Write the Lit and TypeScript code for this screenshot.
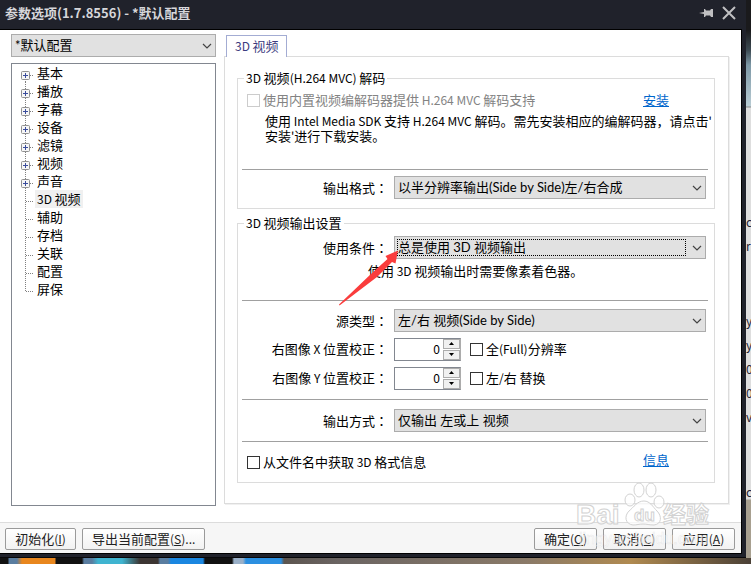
import { LitElement, html, svg, css, nothing } from "lit";
import { customElement, state } from "lit/decorators.js";
import { classMap } from "lit/directives/class-map.js";

interface Category {
  name: string;
  branch: boolean;
}

const CATEGORIES: Category[] = [
  { name: "基本", branch: true },
  { name: "播放", branch: true },
  { name: "字幕", branch: true },
  { name: "设备", branch: true },
  { name: "滤镜", branch: true },
  { name: "视频", branch: true },
  { name: "声音", branch: true },
  { name: "3D 视频", branch: false },
  { name: "辅助", branch: false },
  { name: "存档", branch: false },
  { name: "关联", branch: false },
  { name: "配置", branch: false },
  { name: "屏保", branch: false },
];

/** Sets Latin runs a size smaller than the Chinese text, and centres the wide colon. */
function mixed(text: string) {
  return text
    .split(/([ -~]+|：)/)
    .filter((run) => run)
    .map((run) =>
      run === "："
        ? html`<span class="mid">${run}</span>`
        : /^[ -~]/.test(run)
          ? html`<span class="latin">${run}</span>`
          : run,
    );
}

@customElement("app-root")
export class AppRoot extends LitElement {
  @state() private selected = "3D 视频";

  static styles = css`
    :host {
      display: block;
      font: 13px/16px "Noto Sans CJK SC", "Noto Sans", sans-serif;
      color: #000;
    }
    * {
      box-sizing: border-box;
    }
    button,
    input,
    select {
      font: inherit;
      color: inherit;
      margin: 0;
    }
    .latin {
      font-size: 12px;
      line-height: 1;
      white-space: pre;
    }
    .mid {
      font-family: "Noto Sans CJK JP", sans-serif;
      line-height: 1;
    }
    .desktop {
      display: grid;
      grid-template-columns: 1fr 5px;
      grid-template-rows: 1fr 6px;
      min-height: 100vh;
      background: #17171b;
    }
    .window {
      display: flex;
      flex-direction: column;
      min-width: 0;
      background: #20222b;
      border-bottom: 1px solid #08080a;
      padding: 0 4px 3px 0;
    }
    .titlebar {
      display: flex;
      align-items: center;
      height: 29px;
      padding: 0 5px 4px 5px;
      color: #d6d6da;
    }
    .titlebar h1 {
      flex: 1;
      margin: 0;
      font-size: 13px;
      line-height: 16px;
    }
    .titlebar button {
      display: flex;
      padding: 0;
      border: 0;
      background: none;
      color: #c0c0c2;
    }
    .titlebar .pin {
      margin-right: 8px;
    }
    .client {
      flex: 1;
      display: flex;
      flex-direction: column;
      position: relative;
      background: #fff;
      border: solid #000;
      border-width: 1px 1px 1px 0;
    }
    .main {
      flex: 1;
      display: flex;
      gap: 8px;
      padding: 4px 11px 16px 11px;
    }
    .side {
      flex: none;
      width: 205px;
      display: flex;
      flex-direction: column;
      gap: 6px;
    }
    .drop {
      display: grid;
      position: relative;
      min-width: 0;
      height: 23px;
    }
    .drop > select,
    .drop > svg {
      grid-area: 1 / 1;
    }
    .drop > select {
      appearance: none;
      width: 100%;
      height: 23px;
      padding: 0 24px 2px 3px;
      border: 1px solid #acacac;
      border-radius: 0;
      background: #e1e1e1;
      outline: 0;
      font-family: "Lato", "Noto Sans CJK SC", sans-serif;
    }
    .drop > .chevron {
      z-index: 1;
      align-self: center;
      justify-self: end;
      margin-right: 4px;
      pointer-events: none;
    }
    .drop > .focus {
      grid-area: 1 / 1;
      z-index: 1;
      margin: 3px 20px 3px 3px;
      border: 1px dotted #000;
      pointer-events: none;
    }
    .drop > .arrow {
      position: absolute;
      z-index: 2;
      left: -56px;
      top: 14px;
      pointer-events: none;
    }
    .tree {
      flex: 1;
      margin: 0;
      padding: 0;
      list-style: none;
      border: 1px solid #828790;
    }
    .tree li {
      display: flex;
      height: 18px;
      padding-left: 8px;
    }
    .tree svg {
      flex: none;
    }
    .item {
      margin-left: 1px;
      padding: 0 2px;
      border: 0;
      background: none;
      line-height: 18px;
    }
    .item.on {
      background: #f0f0f0;
    }
    .right {
      flex: 1;
      min-width: 0;
      display: flex;
      flex-direction: column;
      margin-bottom: 2px;
    }
    .tab {
      align-self: flex-start;
      position: relative;
      z-index: 1;
      height: 22px;
      margin: 1px 0 -1px 2px;
      padding: 0 7px 2px 8px;
      border: 1px solid #a3acd3;
      border-bottom: 0;
      background: #fff;
      color: #3c3c80;
    }
    .panel {
      flex: 1;
      padding: 13px 13px 19px 12px;
      border: 1px solid #dcdcdc;
      box-shadow: 1px 1px 0 #f0f0f0;
      margin-right: 1px;
    }
    fieldset {
      min-width: 0;
      margin: 0;
      padding: 0 5px 0 4px;
      border: 1px solid #dcdcdc;
    }
    legend {
      margin-left: 2px;
      padding: 0 2px;
      height: 16px;
    }
    .decode {
      padding-bottom: 9px;
    }
    .output {
      margin-top: 6px;
      padding-bottom: 10px;
    }
    .line {
      display: flex;
      align-items: center;
      justify-content: space-between;
      height: 20px;
      padding: 0 40px 0 5px;
    }
    .first {
      margin-top: 4px;
    }
    .last {
      margin-top: 10px;
    }
    .last a {
      align-self: flex-start;
    }
    .check {
      display: flex;
      align-items: center;
      gap: 3px;
      white-space: nowrap;
    }
    .check.off {
      color: #838383;
    }
    .check input {
      appearance: none;
      flex: none;
      width: 13px;
      height: 13px;
      border: 1px solid #333;
      background: #fff;
    }
    .check.off input {
      border-color: #ccc;
    }
    a {
      color: #0066cc;
    }
    .note {
      margin: 3px 0 0 23px;
      height: 56px;
      line-height: 15px;
      white-space: nowrap;
    }
    hr {
      height: 1px;
      margin: 0;
      margin-right: 1px;
      border: 0;
      background: #a0a0a0;
    }
    .form {
      display: grid;
      grid-template-columns: 146px minmax(0, 1fr);
      column-gap: 6px;
      row-gap: 5px;
      align-items: center;
      padding: 6px 3px 0 0;
    }
    .form > label {
      text-align: right;
      white-space: nowrap;
    }
    .use {
      row-gap: 4px;
      padding: 5px 3px 21px 0;
    }
    .source {
      padding: 8px 3px 9px 0;
    }
    .method {
      padding: 9px 3px 9px 0;
    }
    .hint {
      grid-column: 1 / 3;
      margin: 0 0 0 126px;
    }
    .tune {
      display: flex;
      align-items: center;
      gap: 9px;
      height: 24px;
    }
    .spin {
      display: flex;
      width: 67px;
      height: 23px;
      border: 1px solid #828790;
      border-right-color: #acacac;
    }
    .spin input {
      flex: 1;
      min-width: 0;
      padding: 0 3px 0 0;
      border: 0;
      outline: 0;
      text-align: right;
      font-size: 12px;
    }
    .spin div {
      display: flex;
      flex-direction: column;
      gap: 1px;
      width: 17px;
      background: #fff;
    }
    .spin button {
      flex: 1;
      display: flex;
      align-items: center;
      justify-content: center;
      min-height: 0;
      padding: 0;
      border: 1px solid #acacac;
      background: #f0f0f0;
    }
    .footer {
      display: flex;
      gap: 6px;
      padding: 5px 6px 3px 5px;
      background: #f6f6f6;
      border-top: 1px solid #dcdcdc;
    }
    .footer button {
      height: 22px;
      min-width: 63px;
      padding: 0 9px;
      border: 1px solid #9a9a9a;
      border-radius: 2px;
      background: linear-gradient(#fff, #f2f2f2);
      color: #222;
      white-space: nowrap;
    }
    .footer .reset {
      min-width: 71px;
    }
    .footer .export {
      margin-right: auto;
    }
    .mark {
      position: absolute;
      right: 28px;
      bottom: 2px;
      pointer-events: none;
    }
    .behind {
      display: flex;
      flex-direction: column;
      overflow: hidden;
      padding-top: 210px;
      background: linear-gradient(
        #1a1a1c 0 30px,
        #3c4a52 50px,
        #7d98a6 65px,
        #b9ccd4 106px,
        #8a8a8a 107px,
        #dedede 108px 499px,
        #a8a090 500px
      );
      color: #223;
      font-size: 12px;
      line-height: 24px;
    }
    .group {
      display: flex;
      flex-direction: column;
      margin-bottom: 51px;
    }
    .taskbar {
      grid-column: 1 / 3;
      background: linear-gradient(
        90deg,
        #111 0 8px,
        #5a7da0 9px 17px,
        #e8861d 22px 55px,
        #111 56px 82px,
        #5a7da0 84px 92px,
        #3fb4d0 98px 122px,
        #3c3532 140px 158px,
        #5a7da0 160px 168px,
        #1a86e0 171px 203px,
        #111 205px 232px,
        #9ab0c8 234px 243px,
        #2b8fe0 246px 281px,
        #5c554f 284px,
        #6a6462 45%,
        #8a7a68 70%,
        #b08a50 84%,
        #4a4036
      );
    }
  `;

  private chevron() {
    return html`<svg class="chevron" width="10" height="6" viewBox="0 0 10 6" aria-hidden="true">
      <path d="M1 1l4 4 4-4" fill="none" stroke="#444" stroke-width="1.2" />
    </svg>`;
  }

  private drop(id: string, label: string, value: string, focus = false) {
    return html`<label for=${id}>${mixed(label)}</label>
      <div class="drop">
        <select id=${id}>
          <option>${value}</option>
        </select>
        ${this.chevron()}
        ${focus
          ? html`<span class="focus"></span>
              <svg class="arrow" width="62" height="56" viewBox="0 0 62 56" aria-hidden="true">
                <path
                  d="M1 54.500L34 23 49.500 9 47.500 6 60 0.500 57.500 13.500 54 12 39 27 1.500 55.500z"
                  fill="#fa3c3c"
                />
              </svg>`
          : nothing}
      </div>`;
  }

  private tune(id: string, label: string, option: string) {
    return html`<label for=${id}>${mixed(label)}</label>
      <div class="tune">
        <div class="spin">
          <input id=${id} type="text" inputmode="numeric" value="0" />
          <div>
            <button aria-label="增加">
              <svg width="5" height="3"><path d="M0 3L2.500 0 5 3z" /></svg>
            </button>
            <button aria-label="减少">
              <svg width="5" height="3"><path d="M0 0L2.500 3 5 0z" /></svg>
            </button>
          </div>
        </div>
        <label class="check"><input type="checkbox" /><span>${mixed(option)}</span></label>
      </div>`;
  }

  private node(item: Category, index: number) {
    const last = index === CATEGORIES.length - 1;
    const top = index === 0 ? 11 : 0;
    return html`<li>
      <svg width="14" height="18" viewBox="0 0 14 18" aria-hidden="true">
        <path
          d="M5.500 ${top}V${last ? 12 : 18}M6 11.500H14"
          fill="none"
          stroke="#808080"
          stroke-dasharray="1 1"
        />
        ${item.branch
          ? svg`<rect x="1.500" y="7.500" width="8" height="8" rx="1" fill="#f6f6f6" stroke="#919191" />
              <path d="M3 11.500H8M5.500 9V14" stroke="#3a4c9c" />`
          : nothing}
      </svg>
      <button
        class=${classMap({ item: true, on: item.name === this.selected })}
        @click=${() => (this.selected = item.name)}
      >
        ${mixed(item.name)}
      </button>
    </li>`;
  }

  private footerButton(name: string, key: string, kind = "", tail = "") {
    return html`<button class=${kind}>
      ${name}<span class="latin">(<u>${key}</u>)${tail}</span>
    </button>`;
  }

  private watermark() {
    return html`<svg class="mark" width="138" height="70" viewBox="0 0 138 70" aria-hidden="true">
      <g fill="#fff" fill-opacity="0.7" stroke="#d2d2d2" stroke-width="1">
        <ellipse cx="55" cy="19" rx="5" ry="6" />
        <ellipse cx="64" cy="9" rx="5" ry="7" />
        <ellipse cx="76" cy="9" rx="5" ry="7" />
        <ellipse cx="84" cy="21" rx="5" ry="6" />
        <path d="M69 20c6 0 9 6 13 10 5 5 5 13-3 14-5 0-7-1-11-1s-6 1-10 1c-8-1-9-9-4-14 5-4 8-10 15-10z" />
        <text x="1" y="43" font-family="Liberation Sans" font-weight="700" font-size="28">Bai</text>
        <text x="59" y="40" font-family="Liberation Sans" font-weight="700" font-size="17">du</text>
        <text x="88" y="42" font-family="Noto Sans CJK SC" font-weight="700" font-size="23">经验</text>
      </g>
      <text
        x="4"
        y="63"
        font-family="Liberation Sans"
        font-size="16"
        fill="#fff"
        fill-opacity="0.6"
        stroke="#ccc"
        stroke-opacity="0.4"
        stroke-width="0.5"
      >jingyan.baidu.com</text>
    </svg>`;
  }

  render() {
    return html`<div class="desktop">
      <section class="window">
        <header class="titlebar">
          <h1>参数选项(1.7.8556) - *默认配置</h1>
          <button class="pin" aria-label="置顶">
            <svg width="14" height="10" viewBox="0 0 14 10">
              <path d="M0 5L5 4V1H6L7 2.500H11L12 1H14V9H12L11 7.500H7L6 9H5V6z" fill="currentColor" />
            </svg>
          </button>
          <button aria-label="关闭">
            <svg width="16" height="14" viewBox="0 0 16 14">
              <path d="M2 1L14 13M14 1L2 13" stroke="currentColor" stroke-width="2" />
            </svg>
          </button>
        </header>
        <div class="client">
          <div class="main">
            <nav class="side">
              <div class="drop">
                <select aria-label="配置">
                  <option>*默认配置</option>
                </select>
                ${this.chevron()}
              </div>
              <ul class="tree">
                ${CATEGORIES.map((c, i) => this.node(c, i))}
              </ul>
            </nav>
            <div class="right">
              <button class="tab">${mixed("3D 视频")}</button>
              <div class="panel">
                <fieldset class="decode">
                  <legend>${mixed("3D 视频(H.264 MVC) 解码")}</legend>
                  <div class="line first">
                    <label class="check off"
                      ><input type="checkbox" disabled /><span
                        >${mixed("使用内置视频编解码器提供 H.264 MVC 解码支持")}</span
                      ></label
                    >
                    <a href="#install">安装</a>
                  </div>
                  <p class="note">
                    ${mixed("使用 Intel Media SDK 支持 H.264 MVC 解码。需先安装相应的编解码器，请点击'")}<br />${mixed(
                      "安装'进行下载安装。",
                    )}
                  </p>
                  <hr />
                  <div class="form">
                    ${this.drop("format", "输出格式：", "以半分辨率输出(Side by Side)左/右合成")}
                  </div>
                </fieldset>
                <fieldset class="output">
                  <legend>${mixed("3D 视频输出设置")}</legend>
                  <div class="form use">
                    ${this.drop("condition", "使用条件：", "总是使用 3D 视频输出", true)}
                    <p class="hint">${mixed("使用 3D 视频输出时需要像素着色器。")}</p>
                  </div>
                  <hr />
                  <div class="form source">
                    ${this.drop("source", "源类型：", "左/右 视频(Side by Side)")}
                    ${this.tune("offset-x", "右图像 X 位置校正：", "全(Full)分辨率")}
                    ${this.tune("offset-y", "右图像 Y 位置校正：", "左/右 替换")}
                  </div>
                  <hr />
                  <div class="form method">
                    ${this.drop("method", "输出方式：", "仅输出 左或上 视频")}
                  </div>
                  <hr />
                  <div class="line last">
                    <label class="check"
                      ><input type="checkbox" /><span>${mixed("从文件名中获取 3D 格式信息")}</span></label
                    >
                    <a href="#info">信息</a>
                  </div>
                </fieldset>
              </div>
            </div>
          </div>
          <footer class="footer">
            ${this.footerButton("初始化", "I", "reset")}
            ${this.footerButton("导出当前配置", "S", "export", "...")}
            ${this.footerButton("确定", "O")} ${this.footerButton("取消", "C")}
            ${this.footerButton("应用", "A")}
          </footer>
          ${this.watermark()}
        </div>
      </section>
      <div class="behind">
        <div class="group"><span>c</span><span>ri</span></div>
        <div class="group"><span>y</span><span>y</span><span>02</span><span>02</span><span>v</span></div>
        <span>c</span>
      </div>
      <div class="taskbar"></div>
    </div>`;
  }
}
